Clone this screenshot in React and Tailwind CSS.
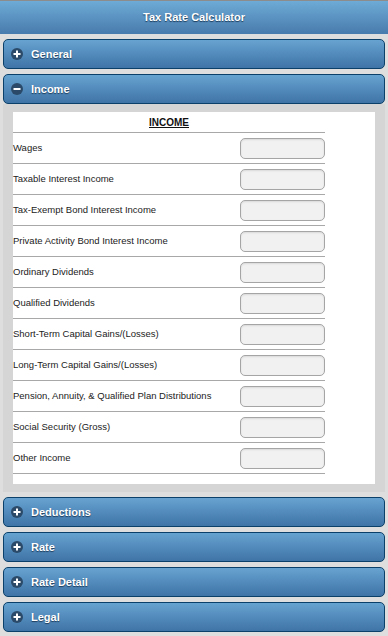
import { useState } from "react";

const incomeRows = [
  "Wages",
  "Taxable Interest Income",
  "Tax-Exempt Bond Interest Income",
  "Private Activity Bond Interest Income",
  "Ordinary Dividends",
  "Qualified Dividends",
  "Short-Term Capital Gains/(Losses)",
  "Long-Term Capital Gains/(Losses)",
  "Pension, Annuity, & Qualified Plan Distributions",
  "Social Security (Gross)",
  "Other Income",
];

function Icon({ open }) {
  return (
    <span className="flex h-[12px] w-[12px] shrink-0 items-center justify-center rounded-full bg-[#2b4a69]">
      <svg width="8" height="8" viewBox="0 0 8 8">
        <rect x="0.5" y="3" width="7" height="2" fill="#fff" />
        {!open && <rect x="3" y="0.5" width="2" height="7" fill="#fff" />}
      </svg>
    </span>
  );
}

function Heading({ title, open, onClick }) {
  return (
    <button
      onClick={onClick}
      className="flex h-[30px] w-full items-center gap-[8px] rounded-[5px] border border-[#0a4069] bg-gradient-to-b from-[#67a3d1] to-[#3f74a7] pl-[7px] text-left text-[11px] font-bold text-white [text-shadow:0_1px_1px_#1c3b5a]"
    >
      <Icon open={open} />
      {title}
    </button>
  );
}

function IncomeTable() {
  return (
    <div className="bg-white pb-[10px]">
      <div className="w-[312px]">
        <div className="flex h-[21px] items-center justify-center border-b border-[#a8a8a8] text-[10px] font-bold text-[#111] underline">
          INCOME
        </div>
        {incomeRows.map((label) => (
          <div key={label} className="flex h-[31px] items-center justify-between border-b border-[#a8a8a8] pt-[1px]">
            <span className="text-[9.5px] text-[#222]">{label}</span>
            <input
              type="text"
              className="h-[21px] w-[85px] rounded-[5px] border border-[#a5a5a5] bg-[#f1f1f1] shadow-[inset_0_1px_2px_rgba(0,0,0,0.1)] outline-none"
            />
          </div>
        ))}
      </div>
    </div>
  );
}

export default function App() {
  const [open, setOpen] = useState("Income");
  const sections = ["General", "Income", "Deductions", "Rate", "Rate Detail", "Legal"];

  return (
    <div className="min-h-[636px] bg-[#dedede] font-['Liberation_Sans',Arial,sans-serif]">
      {/* Header */}
      <div className="flex h-[34px] items-center justify-center border-t border-[#8c8c8c] bg-gradient-to-b from-[#6eabd6] to-[#487bad] text-[11px] font-bold text-white [text-shadow:0_1px_1px_#1c3b5a]">
        Tax Rate Calculator
      </div>

      {/* Collapsibles */}
      <div className="flex flex-col gap-[5px] px-[3px] pt-[5px]">
        {sections.map((s) => (
          <div key={s}>
            <Heading title={s} open={open === s} onClick={() => setOpen(open === s ? null : s)} />
            {open === s && (
              <div className="bg-[#d5d5d5] px-[10px] py-[8px]">
                {s === "Income" ? <IncomeTable /> : <div className="bg-white p-[10px] text-[10px]">&nbsp;</div>}
              </div>
            )}
          </div>
        ))}
      </div>
    </div>
  );
}
